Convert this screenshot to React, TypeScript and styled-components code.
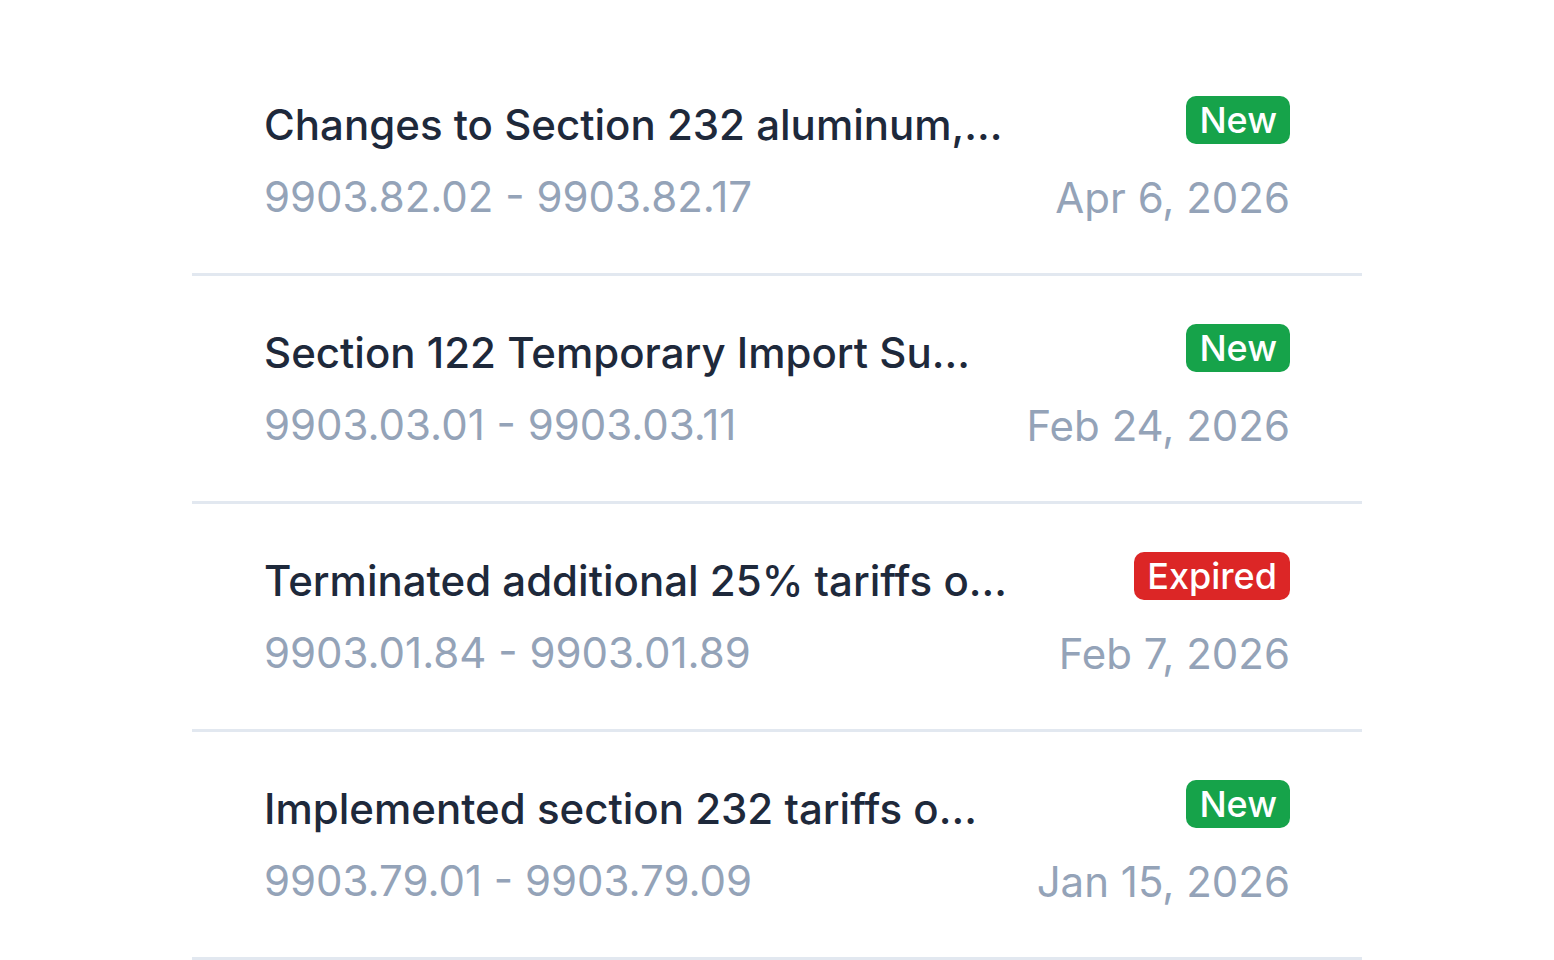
import React from 'react';
import styled, { createGlobalStyle } from 'styled-components';

interface IUpdate {
  title: string;
  range: string;
  date: string;
  status: 'new' | 'expired';
}

const updates: IUpdate[] = [
  {
    title: 'Changes to Section 232 aluminum,…',
    range: '9903.82.02 - 9903.82.17',
    date: 'Apr 6, 2026',
    status: 'new',
  },
  {
    title: 'Section 122 Temporary Import Su…',
    range: '9903.03.01 - 9903.03.11',
    date: 'Feb 24, 2026',
    status: 'new',
  },
  {
    title: 'Terminated additional 25% tariffs o…',
    range: '9903.01.84 - 9903.01.89',
    date: 'Feb 7, 2026',
    status: 'expired',
  },
  {
    title: 'Implemented section 232 tariffs o…',
    range: '9903.79.01 - 9903.79.09',
    date: 'Jan 15, 2026',
    status: 'new',
  },
];

const GlobalStyle = createGlobalStyle`
body {
  margin: 0;
  background: #ffffff;
  font-family: Inter, "Noto Sans", sans-serif;
}
`;

const List = styled.ul`
list-style: none;
margin: 48px auto 0;
padding: 0;
width: 1170px;
`;

const Item = styled.li`
display: flex;
align-items: center;
justify-content: space-between;
gap: 32px;
height: 225px;
padding: 0 72px;
border-bottom: 3px solid #e2e8f0;
`;

const Main = styled.div`
display: flex;
flex-direction: column;
gap: 16px;
min-width: 0;
max-width: 760px;
`;

const Title = styled.div`
font-size: 42px;
line-height: 56px;
font-weight: 500;
color: #1e293b;
white-space: nowrap;
overflow: hidden;
text-overflow: ellipsis;
`;

const Muted = styled.div`
font-size: 42px;
line-height: 56px;
color: #94a3b8;
white-space: nowrap;
`;

const Side = styled.div`
display: flex;
flex-direction: column;
align-items: flex-end;
gap: 26px;
flex-shrink: 0;
`;

const Badge = styled.span<{ $status: IUpdate['status'] }>`
display: inline-flex;
align-items: center;
height: 48px;
padding: 0 13px;
border-radius: 10px;
font-size: 36px;
font-weight: 500;
color: #ffffff;
background: ${({ $status }) => ($status === 'new' ? '#16a34a' : '#dc2626')};
`;

const App: React.FC = () => (
  <>
    <GlobalStyle />
    <List>
      {updates.map((u) => (
        <Item key={u.range}>
          <Main>
            <Title>{u.title}</Title>
            <Muted>{u.range}</Muted>
          </Main>
          <Side>
            <Badge $status={u.status}>{u.status === 'new' ? 'New' : 'Expired'}</Badge>
            <Muted>{u.date}</Muted>
          </Side>
        </Item>
      ))}
    </List>
  </>
);

export default App;
